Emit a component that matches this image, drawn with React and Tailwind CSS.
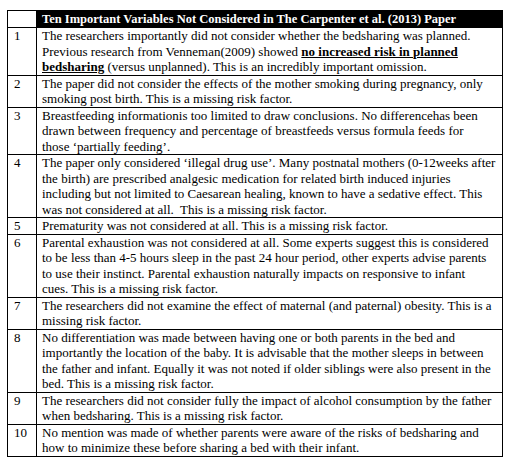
import React from "react";

const rows = [
  ["1", [
    "The researchers importantly did not consider whether the bedsharing was planned.",
    <>Previous research from Venneman(2009) showed <b className="underline">no increased risk in planned</b></>,
    <><b className="underline">bedsharing</b> (versus unplanned). This is an incredibly important omission.</>,
  ]],
  ["2", [
    "The paper did not consider the effects of the mother smoking during pregnancy, only",
    "smoking post birth. This is a missing risk factor.",
  ]],
  ["3", [
    "Breastfeeding informationis too limited to draw conclusions. No differencehas been",
    "drawn between frequency and percentage of breastfeeds versus formula feeds for",
    "those \u2018partially feeding\u2019.",
  ]],
  ["4", [
    "The paper only considered \u2018illegal drug use\u2019. Many postnatal mothers (0-12weeks after",
    "the birth) are prescribed analgesic medication for related birth induced injuries",
    "including but not limited to Caesarean healing, known to have a sedative effect. This",
    "was not considered at all.\u00a0 This is a missing risk factor.",
  ]],
  ["5", ["Prematurity was not considered at all. This is a missing risk factor."]],
  ["6", [
    "Parental exhaustion was not considered at all. Some experts suggest this is considered",
    "to be less than 4-5 hours sleep in the past 24 hour period, other experts advise parents",
    "to use their instinct. Parental exhaustion naturally impacts on responsive to infant",
    "cues. This is a missing risk factor.",
  ]],
  ["7", [
    "The researchers did not examine the effect of maternal (and paternal) obesity. This is a",
    "missing risk factor.",
  ]],
  ["8", [
    "No differentiation was made between having one or both parents in the bed and",
    "importantly the location of the baby. It is advisable that the mother sleeps in between",
    "the father and infant. Equally it was not noted if older siblings were also present in the",
    "bed. This is a missing risk factor.",
  ]],
  ["9", [
    "The researchers did not consider fully the impact of alcohol consumption by the father",
    "when bedsharing. This is a missing risk factor.",
  ]],
  ["10", [
    "No mention was made of whether parents were aware of the risks of bedsharing and",
    "how to minimize these before sharing a bed with their infant.",
  ]],
];

export default function App() {
  return (
    <div
      className="w-[511px] h-[469px] bg-white pt-[10px] pl-[7px]"
      style={{ fontFamily: '"Liberation Serif", "Times New Roman", serif' }}
    >
      <table className="border-collapse table-fixed w-[496px] text-[13px] text-black">
        <tbody>
          <tr className="h-[17px]">
            <td className="border border-black w-[29px]"></td>
            <td className="border border-black bg-black text-white font-bold text-[12.5px] px-[5px] leading-[15px] whitespace-nowrap">
              Ten Important Variables Not Considered in The Carpenter et al. (2013) Paper
            </td>
          </tr>
          {rows.map(([n, lines]) => (
            <tr key={n}>
              <td className="border border-black align-top pl-[6px] leading-[15.5px]">{n}</td>
              <td className="border border-black align-top pl-[5px] pr-0 leading-[15.5px] overflow-hidden">
                {lines.map((l, i) => (
                  <div key={i} className="whitespace-nowrap">{l}</div>
                ))}
              </td>
            </tr>
          ))}
        </tbody>
      </table>
    </div>
  );
}
